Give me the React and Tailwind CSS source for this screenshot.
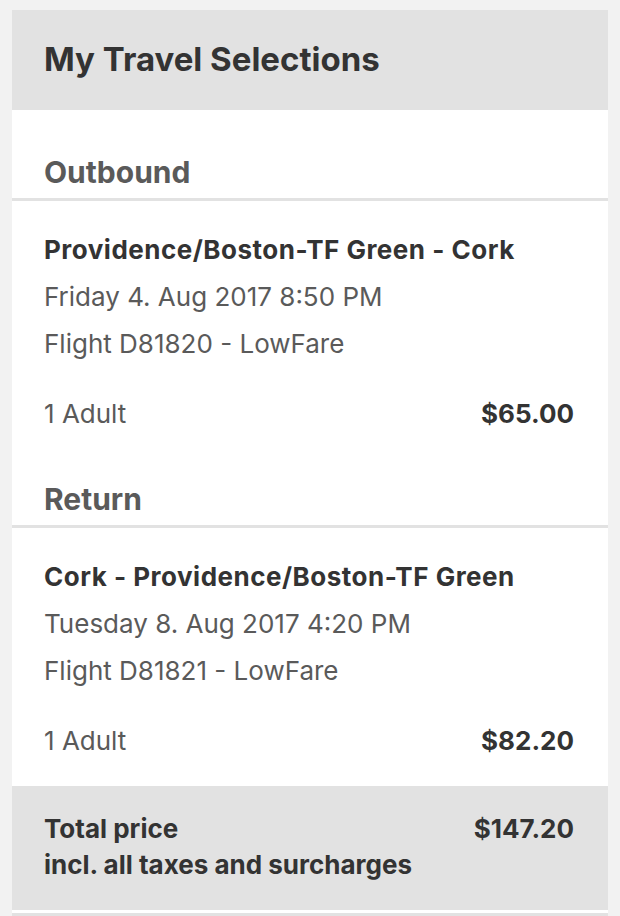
export default function App() {
  const font = { fontFamily: "Inter, 'Open Sans', sans-serif" };
  const Section = ({ title, route, date, flight, price }) => (
    <>
      <div className="h-[88px] flex items-end px-8 pb-[8px]">
        <h3 className="text-[30px] leading-[36px] font-bold text-[#5a5a5a]">{title}</h3>
      </div>
      <div className="h-[3px] bg-[#e2e2e2]" />
      <div className="px-8 pt-[25px]">
        <div className="text-[26px] leading-[47px] font-bold tracking-[0.5px] text-[#333]">{route}</div>
        <div className="text-[26px] leading-[47px] text-[#5a5a5a]">{date}</div>
        <div className="text-[26px] leading-[47px] text-[#5a5a5a]">{flight}</div>
        <div className="flex justify-between items-center h-[47px] mt-[23px] pr-[2px]">
          <span className="text-[26px] text-[#5a5a5a]">1 Adult</span>
          <span className="text-[26px] font-bold text-[#333]">{price}</span>
        </div>
      </div>
    </>
  );
  return (
    <div className="min-h-[916px] bg-[#f2f2f2] pt-[10px] px-[12px]" style={font}>
      <div className="bg-white">
        <div className="h-[100px] bg-[#e2e2e2] flex items-center px-8">
          <h2 className="text-[33px] font-bold text-[#333]">My Travel Selections</h2>
        </div>
        <Section title="Outbound" route="Providence/Boston-TF Green - Cork" date="Friday 4. Aug 2017 8:50 PM" flight="Flight D81820 - LowFare" price="$65.00" />
        <Section title="Return" route="Cork - Providence/Boston-TF Green" date="Tuesday 8. Aug 2017 4:20 PM" flight="Flight D81821 - LowFare" price="$82.20" />
        <div className="mt-[22px] h-[124px] bg-[#e2e2e2] px-8 pt-[25px] flex justify-between">
          <div className="text-[26px] leading-[36px] font-bold text-[#333]">
            <div>Total price</div>
            <div>incl. all taxes and surcharges</div>
          </div>
          <div className="text-[26px] leading-[36px] font-bold text-[#333] pr-[2px]">$147.20</div>
        </div>
        <div className="h-[3px] bg-white" />
        <div className="h-[3px] bg-[#e2e2e2]" />
      </div>
    </div>
  );
}
